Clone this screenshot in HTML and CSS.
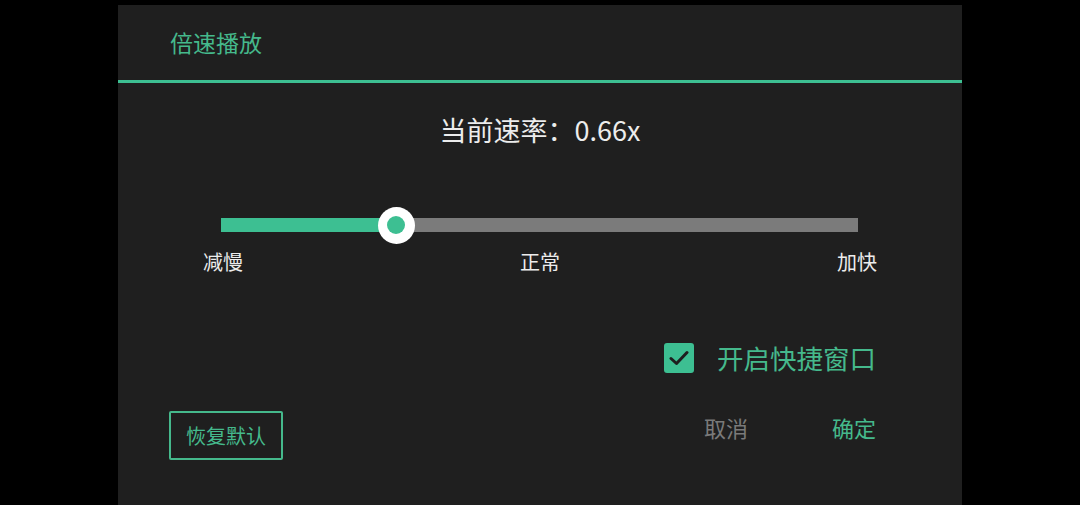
FILE: index.html
```html
<!DOCTYPE html>
<html lang="zh-CN">
<head>
  <meta charset="UTF-8">
  <title>倍速播放</title>
  <link rel="stylesheet" href="styles.css">
</head>
<body>

<div class="speed-dialog">
  <div class="dialog-header">
    <h2 class="dialog-title">倍速播放</h2>
  </div>

  <div class="rate-text">当前速率：0.66x</div>

  <!-- Slider -->
  <div class="slider">
    <div class="slider-track">
      <div class="slider-fill" style="width: 27.5%"></div>
      <div class="slider-thumb" style="left: 27.5%"><span class="thumb-dot"></span></div>
    </div>
  </div>
  <div class="slider-labels">
    <span>减慢</span>
    <span>正常</span>
    <span>加快</span>
  </div>

  <!-- Quick window option -->
  <div class="option-row">
    <span class="checkbox">
      <svg width="20" height="16" viewBox="0 0 20 16">
        <path d="M2 8.5 L7.5 13.5 L18 2.5" fill="none" stroke="#1e1e1e" stroke-width="3" stroke-linecap="round" stroke-linejoin="round"/>
      </svg>
    </span>
    <span class="option-label">开启快捷窗口</span>
  </div>

  <!-- Actions -->
  <div class="dialog-actions">
    <button class="btn-outline">恢复默认</button>
    <div class="action-right">
      <button class="btn-text btn-cancel">取消</button>
      <button class="btn-text btn-ok">确定</button>
    </div>
  </div>
</div>

</body>
</html>
```

FILE: styles.css
```css
:root {
  --green: #3dbf92;
  --green-text: #45b98c;
  --surface: #1f1f1f;
  --text: #ececec;
  --muted: #7a7a7a;
  --track: #7b7b7b;
  --font: 'Noto Sans CJK SC', 'Noto Sans', sans-serif;
}

html, body {
  margin: 0;
  padding: 0;
  height: 505px;
  overflow: hidden;
  background: #000;
  font-family: var(--font);
}

.speed-dialog {
  width: 844px;
  height: 500px;
  margin: 5px 0 0 118px;
  background: var(--surface);
  display: flex;
  flex-direction: column;
}

.dialog-header {
  height: 75px;
  border-bottom: 3px solid var(--green);
  display: flex;
  align-items: center;
  padding-left: 52px;
  box-sizing: content-box;
}

.dialog-title {
  margin: 0;
  font-size: 23px;
  font-weight: 400;
  color: var(--green-text);
  line-height: 30px;
  margin-bottom: 2px;
}

.rate-text {
  margin-top: 31px;
  text-align: center;
  font-size: 27px;
  line-height: 32px;
  color: var(--text);
}

.slider {
  margin: 61px 104px 0 103px;
  height: 36px;
  display: flex;
  align-items: center;
}

.slider-track {
  position: relative;
  flex: 1;
  height: 14px;
  background: var(--track);
}

.slider-fill {
  height: 100%;
  background: var(--green);
}

.slider-thumb {
  position: absolute;
  top: 50%;
  width: 37px;
  height: 37px;
  margin: -18.5px 0 0 -18.5px;
  border-radius: 50%;
  background: #fff;
  display: flex;
  align-items: center;
  justify-content: center;
}

.thumb-dot {
  width: 18px;
  height: 18px;
  border-radius: 50%;
  background: var(--green);
}

.slider-labels {
  margin: 7px 85px 0 85px;
  display: flex;
  justify-content: space-between;
  font-size: 20px;
  line-height: 24px;
  color: var(--text);
}

.option-row {
  margin: 68px 86px 0 0;
  display: flex;
  justify-content: flex-end;
  align-items: center;
  gap: 23px;
  height: 32px;
}

.checkbox {
  width: 30px;
  height: 30px;
  border-radius: 3px;
  background: var(--green);
  display: flex;
  align-items: center;
  justify-content: center;
}

.option-label {
  font-size: 26.5px;
  line-height: 32px;
  color: var(--green-text);
}

.dialog-actions {
  margin: 37px 86px 0 51px;
  display: flex;
  justify-content: space-between;
  align-items: flex-start;
}

.btn-outline {
  width: 114px;
  height: 49px;
  background: transparent;
  border: 2px solid var(--green-text);
  border-radius: 2px;
  color: var(--green-text);
  font-family: var(--font);
  font-size: 20px;
  padding: 0;
  cursor: pointer;
}

.action-right {
  display: flex;
  gap: 84px;
}

.btn-text {
  background: transparent;
  border: none;
  padding: 0;
  font-family: var(--font);
  font-size: 22px;
  line-height: 33px;
  cursor: pointer;
}

.btn-cancel {
  color: var(--muted);
}

.btn-ok {
  color: var(--green-text);
}
```
